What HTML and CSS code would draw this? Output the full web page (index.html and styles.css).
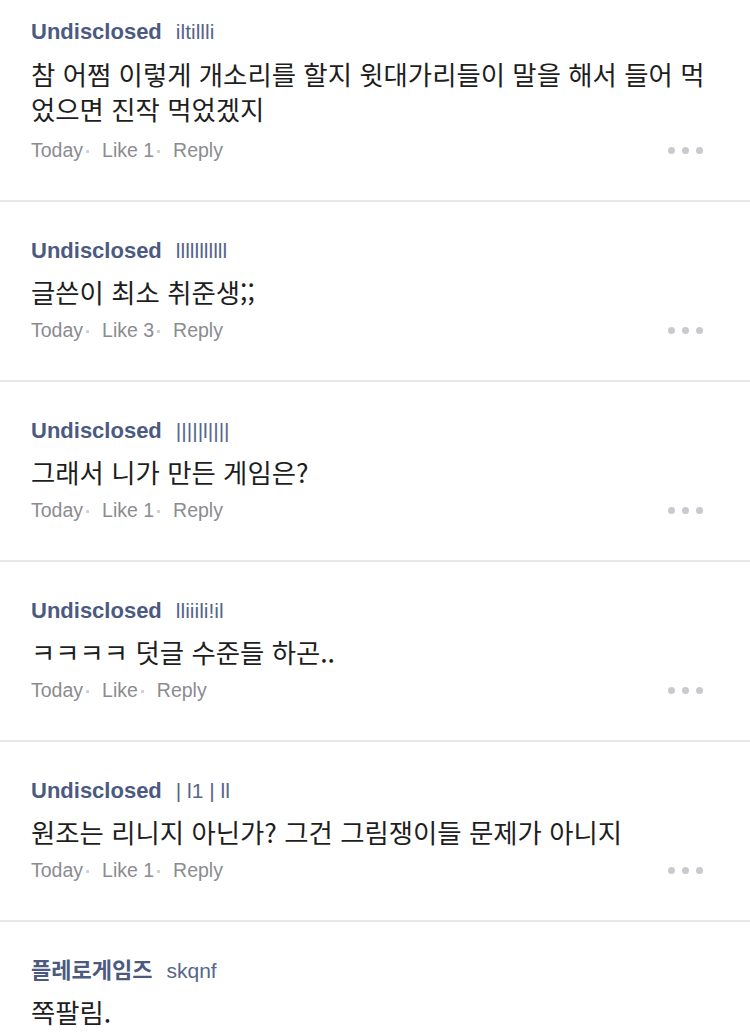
FILE: index.html
```html
<!DOCTYPE html>
<html lang="ko">
<head>
    <meta charset="UTF-8">
    <meta name="viewport" content="width=device-width, initial-scale=1.0">
    <title>Comments</title>
    <link rel="stylesheet" href="styles.css">
</head>
<body>
    <div class="comment-list">
        <div class="comment first">
            <div class="comment-head">
                <span class="author">Undisclosed</span>
                <span class="handle">iltillli</span>
            </div>
            <p class="comment-text">참 어쩜 이렇게 개소리를 할지 윗대가리들이 말을 해서 들어 먹었으면 진작 먹었겠지</p>
            <div class="comment-meta">
                <span>Today</span><span class="sep"></span>
                <span>Like 1</span><span class="sep"></span>
                <span>Reply</span>
                <span class="more"><i></i><i></i><i></i></span>
            </div>
        </div>
        <div class="comment">
            <div class="comment-head">
                <span class="author">Undisclosed</span>
                <span class="handle">lllllllllll</span>
            </div>
            <p class="comment-text">글쓴이 최소 취준생;;</p>
            <div class="comment-meta">
                <span>Today</span><span class="sep"></span>
                <span>Like 3</span><span class="sep"></span>
                <span>Reply</span>
                <span class="more"><i></i><i></i><i></i></span>
            </div>
        </div>
        <div class="comment">
            <div class="comment-head">
                <span class="author">Undisclosed</span>
                <span class="handle">|||||l||||</span>
            </div>
            <p class="comment-text">그래서 니가 만든 게임은?</p>
            <div class="comment-meta">
                <span>Today</span><span class="sep"></span>
                <span>Like 1</span><span class="sep"></span>
                <span>Reply</span>
                <span class="more"><i></i><i></i><i></i></span>
            </div>
        </div>
        <div class="comment">
            <div class="comment-head">
                <span class="author">Undisclosed</span>
                <span class="handle">lliiili!il</span>
            </div>
            <p class="comment-text">ㅋㅋㅋㅋ 덧글 수준들 하곤..</p>
            <div class="comment-meta">
                <span>Today</span><span class="sep"></span>
                <span>Like</span><span class="sep"></span>
                <span>Reply</span>
                <span class="more"><i></i><i></i><i></i></span>
            </div>
        </div>
        <div class="comment">
            <div class="comment-head">
                <span class="author">Undisclosed</span>
                <span class="handle">| l1 | ll</span>
            </div>
            <p class="comment-text">원조는 리니지 아닌가? 그건 그림쟁이들 문제가 아니지</p>
            <div class="comment-meta">
                <span>Today</span><span class="sep"></span>
                <span>Like 1</span><span class="sep"></span>
                <span>Reply</span>
                <span class="more"><i></i><i></i><i></i></span>
            </div>
        </div>
        <div class="comment">
            <div class="comment-head">
                <span class="author">플레로게임즈</span>
                <span class="handle">skqnf</span>
            </div>
            <p class="comment-text">쪽팔림.</p>
        </div>
    </div>
</body>
</html>
```

FILE: styles.css
```css
body {
    margin: 0;
    padding: 0;
    background-color: #fff;
    font-family: "Liberation Sans", "Noto Sans CJK KR", Arial, sans-serif;
    overflow: hidden;
}
.comment-list {
    display: flex;
    flex-direction: column;
}
.comment {
    padding: 35px 38px 36px 31px;
    border-top: 2px solid #e8e8e8;
}
.comment.first {
    padding-top: 18px;
    padding-bottom: 36px;
    border-top: none;
}
.comment-head {
    display: flex;
    align-items: baseline;
    gap: 14px;
    height: 28px;
    line-height: 28px;
}
.author {
    font-size: 22px;
    font-weight: bold;
    color: #4b5a80;
}
.handle {
    font-size: 21px;
    color: #56658a;
}
.comment-text {
    margin: 9px 0 0;
    font-family: "Noto Sans CJK KR", "Liberation Sans", sans-serif;
    font-size: 26.4px;
    line-height: 35px;
    color: #1e1e1e;
}
.first .comment-text {
    margin-top: 10px;
}
.comment-meta {
    display: flex;
    align-items: center;
    margin-top: 7px;
    height: 28px;
    font-size: 19.5px;
    color: #8b8b90;
}
.first .comment-meta {
    margin-top: 10px;
}
.sep {
    width: 3px;
    height: 3px;
    margin: 2px 13px 0 3px;
    background-color: #d2d2d6;
}
.more {
    display: flex;
    gap: 7px;
    margin-left: auto;
    margin-right: 9px;
}
.more i {
    width: 7px;
    height: 7px;
    border-radius: 50%;
    background-color: #c9c9d0;
}
```
